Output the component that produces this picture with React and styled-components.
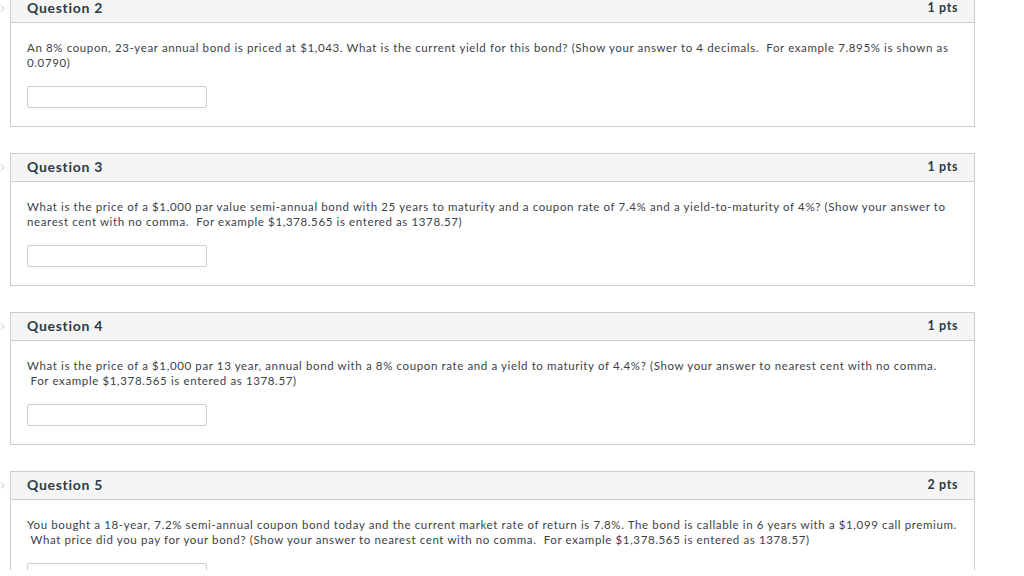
import React from 'react'
import styled, { createGlobalStyle } from 'styled-components'

const GlobalStyle = createGlobalStyle`
  html, body {
    margin: 0;
    padding: 0;
    background: #ffffff;
  }
  body {
    font-family: Lato, 'Liberation Sans', sans-serif;
    color: #2d3b45;
    overflow: hidden;
  }
`

const Page = styled.div`
  width: 1024px;
  height: 576px;
  overflow: hidden;
  display: flex;
  flex-direction: column;
  gap: 26px;
  margin-top: -6px;
`

const Row = styled.div`
  display: flex;
  align-items: flex-start;
`

const Gutter = styled.div`
  width: 10px;
  height: 28px;
  display: flex;
  align-items: center;
  justify-content: flex-start;
  svg {
    width: 5px;
    height: 7px;
  }
`

const Card = styled.div`
  width: 965px;
  box-sizing: border-box;
  border: 1px solid #c7cdd1;
  background: #fff;
`

const Header = styled.div`
  height: 28px;
  box-sizing: border-box;
  padding: 0 16px 2px 16px;
  background: #f5f5f5;
  border-bottom: 1px solid #c7cdd1;
  display: flex;
  align-items: center;
  justify-content: space-between;
  font-weight: 700;
  font-size: 14px;
  letter-spacing: 0.7px;
  color: #2d3b45;
`

const Pts = styled.span`
  font-size: 12.5px;
  letter-spacing: 0.6px;
`

const Body = styled.div`
  padding: 17px 16px 18px 16px;
`

const Text = styled.div`
  font-size: 11.5px;
  letter-spacing: 0.62px;
  line-height: 15px;
  color: #3b4248;
  height: 30px;
  white-space: nowrap;
`

const Answer = styled.div`
  margin-top: 16px;
  width: 180px;
  height: 22px;
  box-sizing: border-box;
  border: 1px solid #c7cdd1;
  border-radius: 2px;
  background: #fff;
`

const questions = [
  {
    title: 'Question 2',
    pts: '1 pts',
    lines: [
      'An 8% coupon, 23-year annual bond is priced at $1,043. What is the current yield for this bond? (Show your answer to 4 decimals.\u00a0 For example 7.895% is shown as',
      '0.0790)',
    ],
  },
  {
    title: 'Question 3',
    pts: '1 pts',
    lines: [
      'What is the price of a $1,000 par value semi-annual bond with 25 years to maturity and a coupon rate of 7.4% and a yield-to-maturity of 4%? (Show your answer to',
      'nearest cent with no comma.\u00a0 For example $1,378.565 is entered as 1378.57)',
    ],
  },
  {
    title: 'Question 4',
    pts: '1 pts',
    lines: [
      'What is the price of a $1,000 par 13 year, annual bond with a 8% coupon rate and a yield to maturity of 4.4%? (Show your answer to nearest cent with no comma.',
      '\u00a0For example $1,378.565 is entered as 1378.57)',
    ],
  },
  {
    title: 'Question 5',
    pts: '2 pts',
    lines: [
      'You bought a 18-year, 7.2% semi-annual coupon bond today and the current market rate of return is 7.8%. The bond is callable in 6 years with a $1,099 call premium.',
      '\u00a0What price did you pay for your bond? (Show your answer to nearest cent with no comma.\u00a0 For example $1,378.565 is entered as 1378.57)',
    ],
  },
]

const Chevron = () => (
  <svg viewBox="0 0 5 7">
    <path d="M1 0.5 L4 3.5 L1 6.5" fill="none" stroke="#b9c1c6" strokeWidth="1" />
  </svg>
)

export default function App() {
  return (
    <>
      <GlobalStyle />
      <Page>
        {questions.map((q) => (
          <Row key={q.title}>
            <Gutter><Chevron /></Gutter>
            <Card>
              <Header>
                <span>{q.title}</span>
                <Pts>{q.pts}</Pts>
              </Header>
              <Body>
                <Text>
                  {q.lines[0]}
                  <br />
                  {q.lines[1]}
                </Text>
                <Answer />
              </Body>
            </Card>
          </Row>
        ))}
      </Page>
    </>
  )
}
